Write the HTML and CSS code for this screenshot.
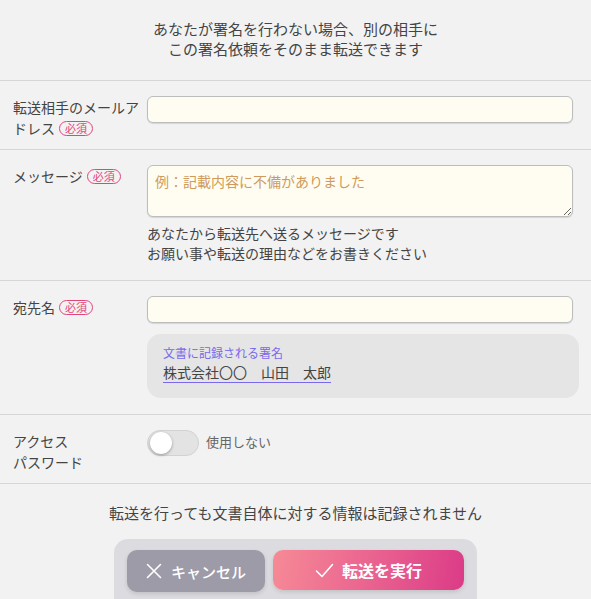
FILE: index.html
```html
<!DOCTYPE html>
<html lang="ja">
<head>
<meta charset="utf-8">
<title>転送</title>
<link rel="stylesheet" href="styles.css">
</head>
<body>
<div class="page">
  <div class="intro">あなたが署名を行わない場合、別の相手に<br>この署名依頼をそのまま転送できます</div>

  <div class="row">
    <div class="label"><span class="line">転送相手のメールア</span><span class="line">ドレス<span class="req">必須</span></span></div>
    <div class="field">
      <input class="input" type="text">
    </div>
  </div>

  <div class="row">
    <div class="label">メッセージ<span class="req">必須</span></div>
    <div class="field">
      <textarea class="input textarea" placeholder="例：記載内容に不備がありました"></textarea>
      <p class="help">あなたから転送先へ送るメッセージです<br>お願い事や転送の理由などをお書きください</p>
    </div>
  </div>

  <div class="row">
    <div class="label">宛先名<span class="req">必須</span></div>
    <div class="field">
      <input class="input" type="text">
      <div class="sigbox">
        <div class="sig-label">文書に記録される署名</div>
        <div class="sig-name">株式会社〇〇　山田　太郎</div>
      </div>
    </div>
  </div>

  <div class="row">
    <div class="label"><span class="line">アクセス</span><span class="line">パスワード</span></div>
    <div class="field toggle-field">
      <span class="toggle"><span class="knob"></span></span>
      <span class="toggle-text">使用しない</span>
    </div>
  </div>

  <div class="footer">
    <p class="note">転送を行っても文書自体に対する情報は記録されません</p>
    <div class="bar">
      <button class="btn cancel" type="button">
        <svg width="16" height="16" viewBox="0 0 16 16"><path d="M1.5 1.5 L14.5 14.5 M14.5 1.5 L1.5 14.5" stroke="#fff" stroke-width="1.6" fill="none" stroke-linecap="round"/></svg>
        <span>キャンセル</span>
      </button>
      <button class="btn exec" type="button">
        <svg width="19" height="15" viewBox="0 0 19 15"><path d="M1.5 8 L7 13.5 L17.5 1.5" stroke="#fff" stroke-width="1.6" fill="none" stroke-linecap="round" stroke-linejoin="round"/></svg>
        <span>転送を実行</span>
      </button>
    </div>
  </div>
</div>
</body>
</html>
```

FILE: styles.css
```css
* { box-sizing: border-box; }
html, body {
  margin: 0;
  padding: 0;
  background: #f2f2f2;
}
body {
  font-family: "Noto Sans CJK JP", "Noto Sans", sans-serif;
  color: #444;
  font-size: 14px;
  overflow: hidden;
}
.page {
  width: 591px;
}
.intro {
  text-align: center;
  font-size: 15px;
  line-height: 20px;
  padding: 19px 0 21px;
  border-bottom: 1px solid #d6d6d6;
}
.row {
  display: flex;
  padding: 15px 12px 11px 13px;
  border-bottom: 1px solid #d6d6d6;
}
.label {
  flex: 0 0 134px;
  padding-right: 6px;
  padding-top: 1px;
  line-height: 20.5px;
  font-size: 14px;
  color: #444;
}
.line {
  display: block;
  height: 20.5px;
}
.req {
  display: inline-block;
  margin-left: 4px;
  height: 15px;
  padding: 0 5px;
  border: 1.5px solid #e2457c;
  border-radius: 8px;
  color: #e2457c;
  font-size: 11px;
  line-height: 12px;
  vertical-align: 1px;
}
.field {
  flex: 1;
  display: flex;
  flex-direction: column;
}
.input {
  display: block;
  width: 426px;
  height: 27px;
  background: #fffdf2;
  border: 1px solid #bdbdbd;
  border-radius: 6px;
  box-shadow: 0 1px 1px rgba(0,0,0,0.12);
  font-family: inherit;
  font-size: 14px;
  color: #444;
  margin: 0;
  outline: none;
}
.textarea {
  height: 52px;
  padding: 5px 7px;
  resize: vertical;
  line-height: 20px;
}
.textarea::placeholder {
  color: #cf9a5a;
}
.help {
  margin: 6px 0 6px;
  font-size: 14px;
  line-height: 20px;
}
.sigbox {
  margin: 11px 0 5px;
  height: 64px;
  background: #e5e5e5;
  border-radius: 14px;
  padding: 10px 16px 0;
}
.sig-label {
  color: #7a69ec;
  font-size: 12px;
  line-height: 17px;
}
.sig-name {
  display: inline-block;
  margin-top: 2px;
  font-size: 14px;
  line-height: 19px;
  border-bottom: 1.5px solid #7a69ec;
  color: #444;
}
.toggle-field {
  flex-direction: row;
  align-items: center;
  align-self: flex-start;
  gap: 7px;
}
.toggle {
  position: relative;
  width: 52px;
  height: 26px;
  border-radius: 13px;
  background: #e3e3e3;
  border: 1px solid #d2d2d2;
  display: inline-block;
}
.knob {
  position: absolute;
  left: 2px;
  top: 1px;
  width: 22px;
  height: 22px;
  border-radius: 50%;
  background: #fff;
  box-shadow: 0 1px 3px rgba(0,0,0,0.35);
}
.toggle-text {
  font-size: 13px;
  color: #666;
  line-height: 18px;
  margin-top: -2px;
}
.footer {
  display: flex;
  flex-direction: column;
  align-items: center;
}
.note {
  margin: 18px 0 16px;
  font-size: 15px;
  line-height: 21px;
}
.bar {
  display: flex;
  align-items: flex-start;
  gap: 8px;
  background: #dcdce0;
  border-radius: 14px 14px 0 0;
  padding: 11px 13px 12px;
}
.btn {
  display: flex;
  align-items: center;
  justify-content: center;
  border: none;
  border-radius: 10px;
  color: #fff;
  font-family: inherit;
  gap: 9px;
  padding: 0;
  box-shadow: 0 2px 4px rgba(0,0,0,0.12);
}
.cancel {
  width: 138px;
  height: 42px;
  background: #9c9ba7;
  font-size: 15px;
  font-weight: 500;
}
.exec {
  width: 191px;
  height: 40px;
  background: linear-gradient(100deg, #f68a96 0%, #ea6490 50%, #db3b87 100%);
  font-size: 16px;
  font-weight: 700;
  gap: 8px;
}
```
